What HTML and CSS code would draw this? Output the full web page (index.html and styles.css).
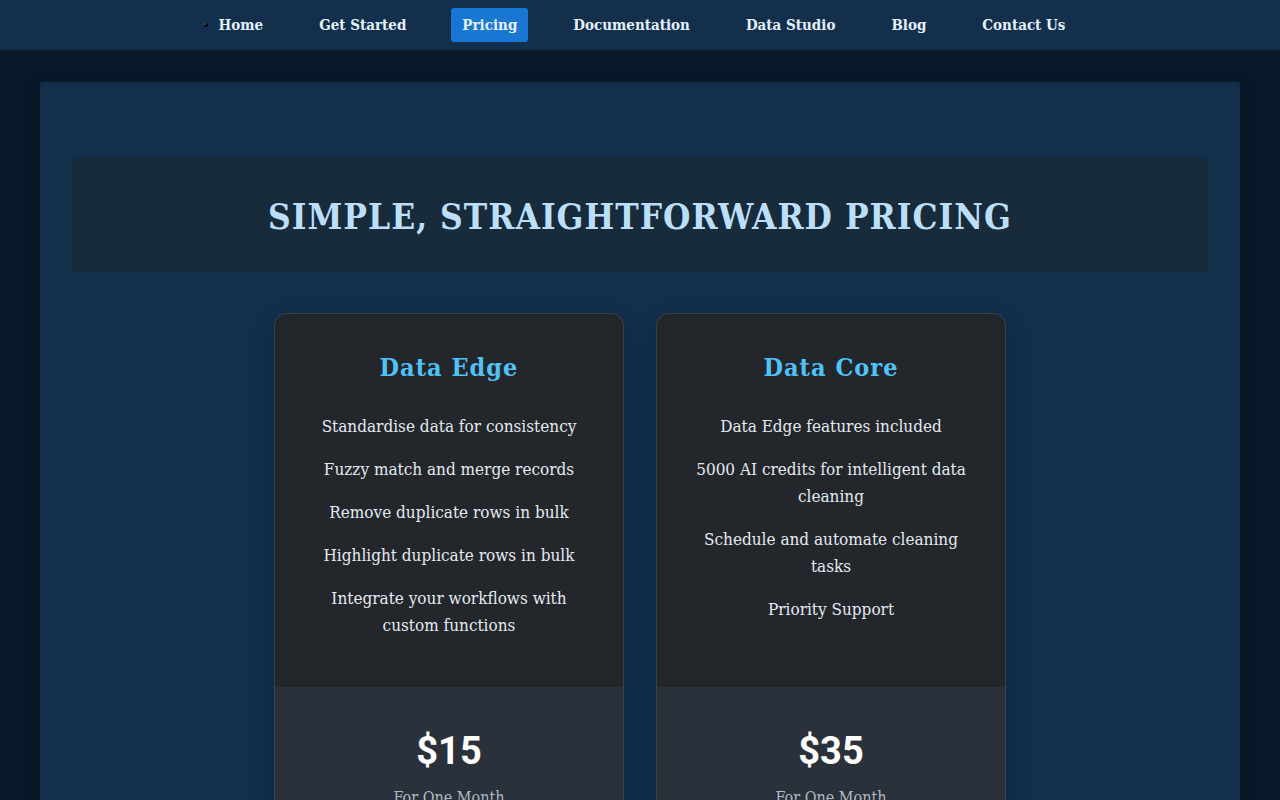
FILE: index.html
```html
<!DOCTYPE html>
<html lang="en">
<head>
  <meta charset="UTF-8">
  <meta name="viewport" content="width=device-width, initial-scale=1.0">
  <title>Pricing</title>
  <link rel="stylesheet" href="styles.css">
</head>
<body>
  <nav class="navbar">
    <svg class="nav-dot" viewBox="0 0 4 4" aria-hidden="true">
      <circle cx="2" cy="2" r="2" fill="#05090d"/>
      <circle cx="1" cy="1" r="1" fill="#4a5560"/>
    </svg>
    <ul class="nav-links">
      <li><a href="#">Home</a></li>
      <li><a href="#">Get Started</a></li>
      <li><a href="#" class="active">Pricing</a></li>
      <li><a href="#">Documentation</a></li>
      <li><a href="#">Data Studio</a></li>
      <li><a href="#">Blog</a></li>
      <li><a href="#">Contact Us</a></li>
    </ul>
  </nav>

  <main class="container">
    <h1 class="page-title">Simple, Straightforward Pricing</h1>
    <div class="plans">
      <section class="plan">
        <div class="plan-body">
          <h2>Data Edge</h2>
          <ul class="features">
            <li>Standardise data for consistency</li>
            <li>Fuzzy match and merge records</li>
            <li>Remove duplicate rows in bulk</li>
            <li>Highlight duplicate rows in bulk</li>
            <li>Integrate your workflows with custom functions</li>
          </ul>
        </div>
        <div class="plan-price">
          <div class="price">$15</div>
          <div class="period">For One Month</div>
        </div>
      </section>
      <section class="plan">
        <div class="plan-body">
          <h2>Data Core</h2>
          <ul class="features">
            <li>Data Edge features included</li>
            <li>5000 AI credits for intelligent data cleaning</li>
            <li>Schedule and automate cleaning tasks</li>
            <li>Priority Support</li>
          </ul>
        </div>
        <div class="plan-price">
          <div class="price">$35</div>
          <div class="period">For One Month</div>
        </div>
      </section>
    </div>
  </main>
</body>
</html>
```
FILE: styles.css
```css
* {
  box-sizing: border-box;
}
html {
  scrollbar-width: none;
}
body {
  margin: 0;
  font-family: 'Roboto Slab', 'DejaVu Serif Condensed', 'DejaVu Serif', serif;
  font-size: 16px;
  line-height: 27px;
  background: #0a1929;
  color: #e3f2fd;
}
.navbar {
  display: flex;
  justify-content: center;
  align-items: center;
  height: 50px;
  background: #132f4c;
  box-shadow: 0 2px 10px rgba(0, 0, 0, 0.1);
}
.nav-dot {
  width: 4px;
  height: 4px;
}
.nav-links {
  display: flex;
  gap: 34px;
  margin: 0;
  padding: 0;
  list-style: none;
}
.nav-links a {
  display: block;
  padding: 4px 11px;
  font-size: 15px;
  line-height: 26px;
  border-radius: 3px;
  font-weight: bold;
  color: #e3f2fd;
  text-decoration: none;
  white-space: nowrap;
}
.nav-links a:hover,
.nav-links .active {
  background: #1976d2;
}
.container {
  max-width: 1200px;
  margin: 32px auto;
  padding: 76px 32px 32px;
  background: #132f4c;
  border-radius: 3px;
  box-shadow: 0 4px 20px rgba(0, 0, 0, 0.1);
}
.page-title {
  margin: 0 0 41px;
  padding: 26px 24px 22px;
  background: #172b3a;
  border-radius: 2px;
  font-size: 35px;
  line-height: 66px;
  letter-spacing: 1px;
  text-align: center;
  text-transform: uppercase;
  color: #bbdefb;
}
.plans {
  display: flex;
  flex-wrap: wrap;
  justify-content: center;
  gap: 32px;
}
.plan {
  display: flex;
  flex-direction: column;
  width: 350px;
  background: #23272b;
  border: 1px solid #3a4149;
  border-radius: 12px;
  box-shadow: 0 8px 24px rgba(0, 0, 0, 0.2);
  text-align: center;
  overflow: hidden;
}
.plan-body {
  flex: 1;
  padding: 30px 32px 32px;
}
.plan h2 {
  margin: 0 0 22px;
  font-size: 25px;
  line-height: 47px;
  letter-spacing: 1px;
  color: #4fc3f7;
}
.features {
  margin: 0;
  padding: 0;
  list-style: none;
  font-size: 17px;
  color: #e3eaf2;
}
.features li {
  margin-bottom: 16px;
}
.plan-price {
  padding: 32px;
  background: #2a313a;
}
.price {
  font-family: 'Roboto Slab', Roboto, sans-serif;
  font-size: 38px;
  line-height: 65px;
  font-weight: bold;
  color: #fff;
}
.period {
  color: #b0b8c1;
}
```
